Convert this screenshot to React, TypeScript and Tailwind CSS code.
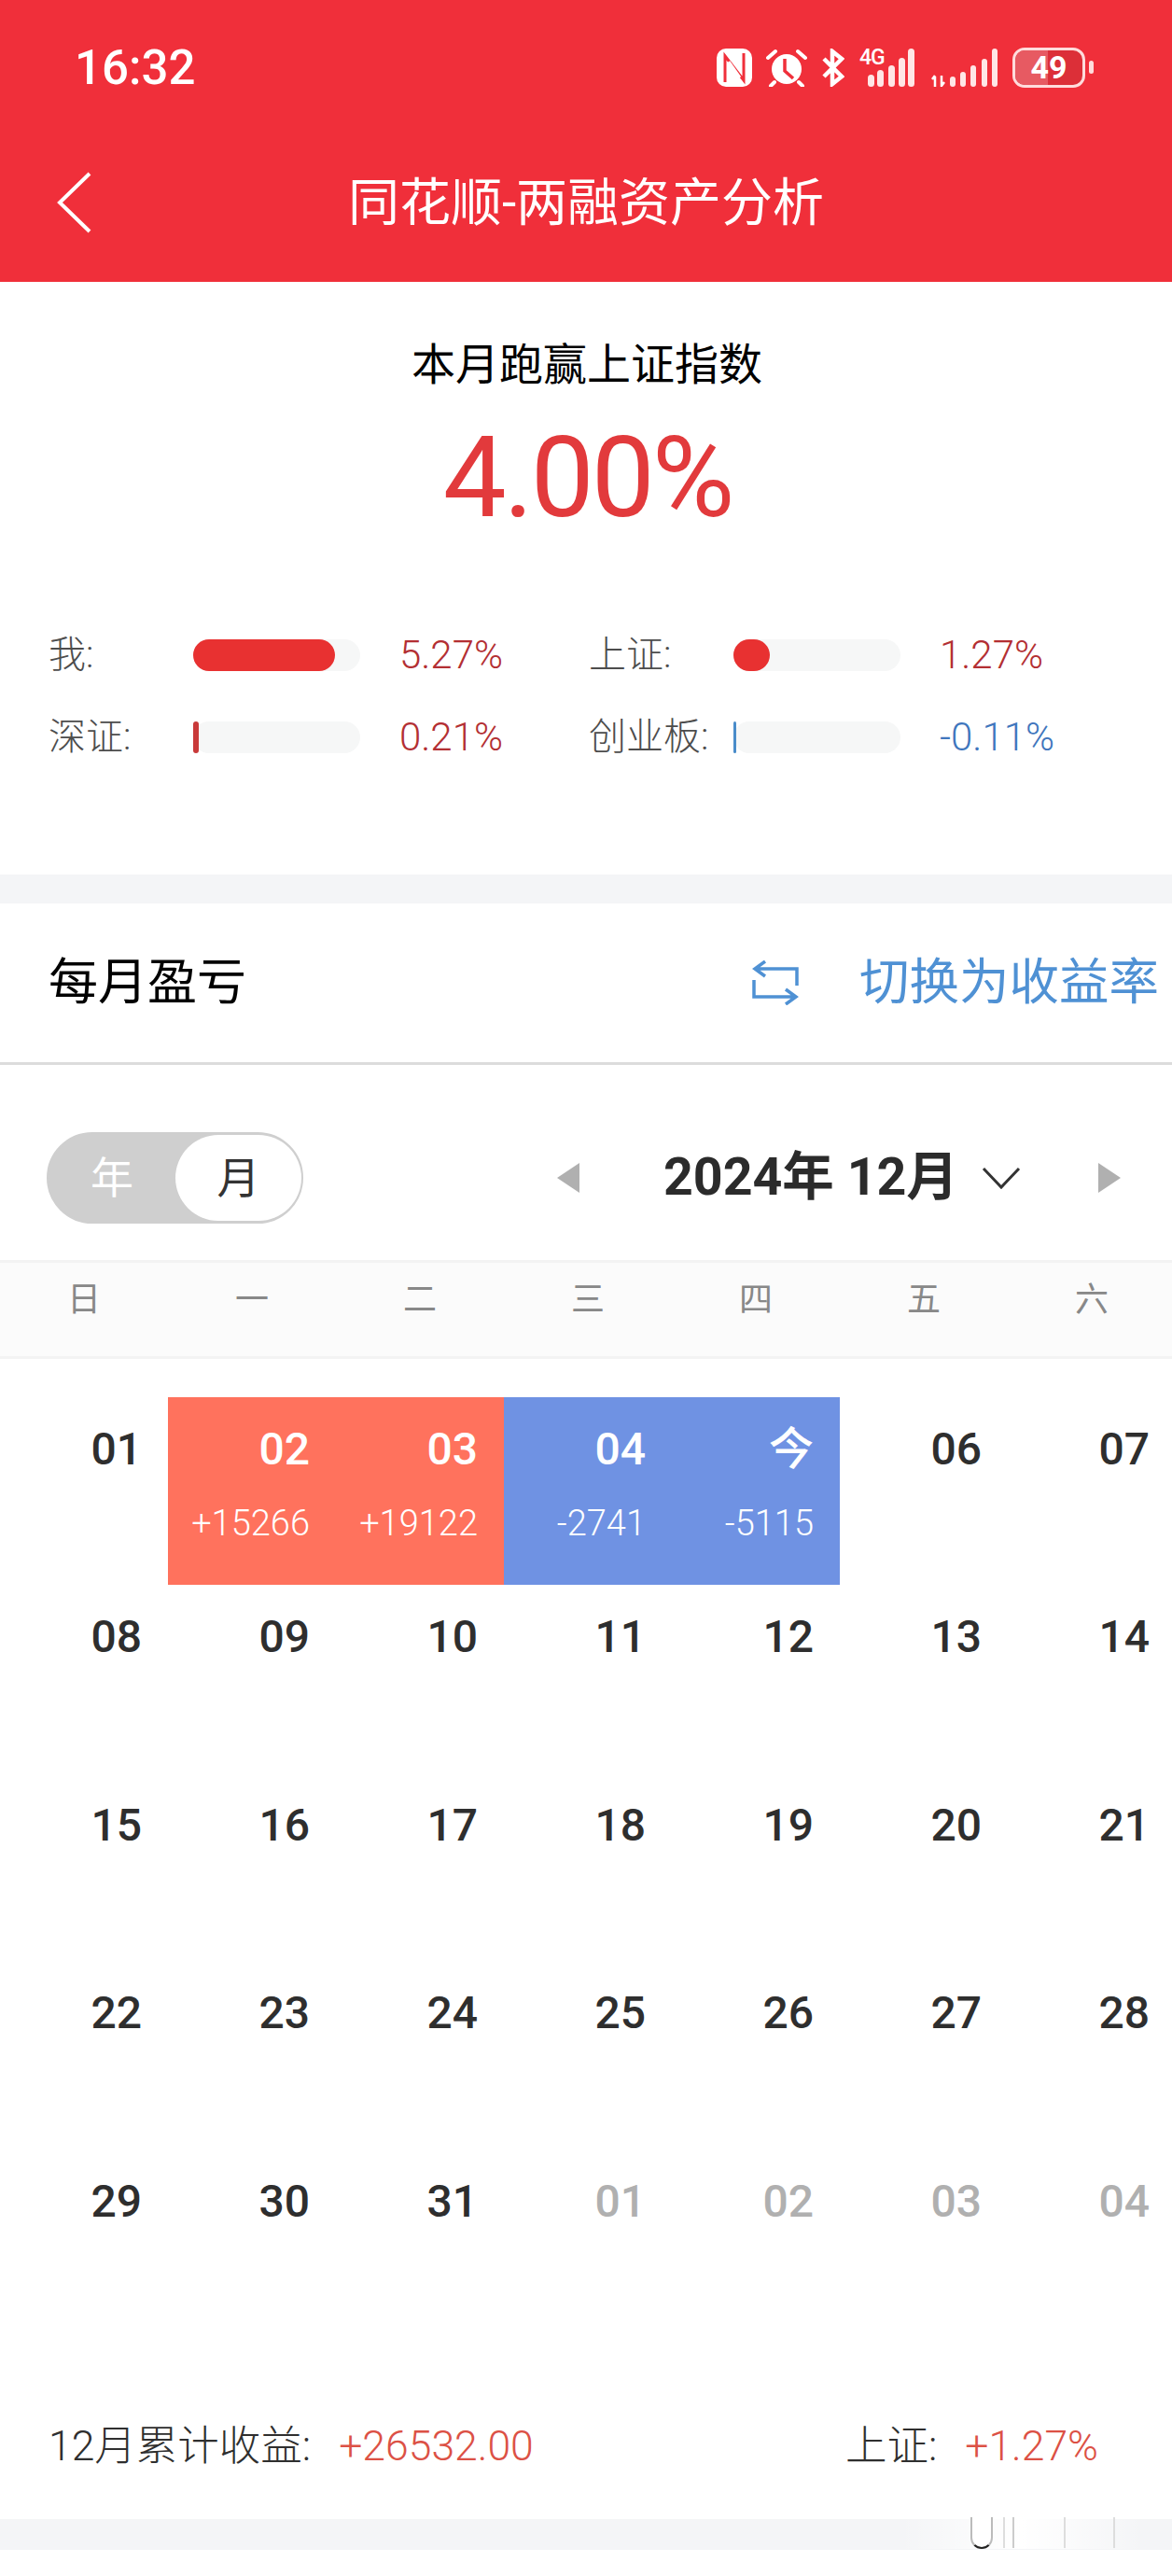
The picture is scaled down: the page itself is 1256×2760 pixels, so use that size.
import React from 'react';

type Day = { d: string; tone?: 'up' | 'down'; sub?: string; muted?: boolean };

const rows: Day[][] = [
  [
    { d: '01' },
    { d: '02', tone: 'up', sub: '+15266' },
    { d: '03', tone: 'up', sub: '+19122' },
    { d: '04', tone: 'down', sub: '-2741' },
    { d: '今', tone: 'down', sub: '-5115' },
    { d: '06' },
    { d: '07' },
  ],
  ['08', '09', '10', '11', '12', '13', '14'].map((d) => ({ d })),
  ['15', '16', '17', '18', '19', '20', '21'].map((d) => ({ d })),
  ['22', '23', '24', '25', '26', '27', '28'].map((d) => ({ d })),
  [
    { d: '29' },
    { d: '30' },
    { d: '31' },
    { d: '01', muted: true },
    { d: '02', muted: true },
    { d: '03', muted: true },
    { d: '04', muted: true },
  ],
];

const weekdays = ['日', '一', '二', '三', '四', '五', '六'];

const StatusIcons = () => (
  <div className="flex items-center ml-auto mr-[84px]">
    {/* nfc */}
    <svg width="38" height="41" viewBox="0 0 38 41">
      <rect x="0" y="0" width="38" height="41" rx="10" fill="#fff" />
      <path d="M9 36V8l20 26V5" fill="none" stroke="#f02f3a" strokeWidth="3" />
      <path d="M13 14l12 17" fill="none" stroke="#fff" strokeWidth="3" />
    </svg>
    {/* alarm */}
    <svg className="ml-[14px]" width="46" height="41" viewBox="0 0 46 41">
      <circle cx="23" cy="22" r="16" fill="#fff" />
      <path d="M3 10 11 3M43 10 35 3M10 36l-4 4M36 36l4 4" stroke="#fff" strokeWidth="4" strokeLinecap="round" />
      <path d="M21 11v13l9 8" fill="none" stroke="#f02f3a" strokeWidth="3.5" />
    </svg>
    {/* bluetooth */}
    <svg className="ml-[14px]" width="25" height="41" viewBox="0 0 25 41">
      <path d="M3 11 22 30 12 38V3l10 8L3 30" fill="none" stroke="#fff" strokeWidth="4.5" />
    </svg>
    {/* 4g signal */}
    <div className="ml-[16px] relative w-[59px] h-[41px]">
      <span className="absolute left-0 top-[-3px] text-[23px] leading-[26px] font-medium text-white tracking-[-1px]">4G</span>
      <svg className="absolute left-0 top-0" width="59" height="41" viewBox="0 0 59 41">
        <rect x="9" y="28" width="7" height="13" rx="3.5" fill="#ffe6e6" />
        <rect x="19" y="23" width="7" height="18" rx="3.5" fill="#ffe6e6" />
        <rect x="31" y="18" width="7" height="23" rx="3.5" fill="#ffe6e6" />
        <rect x="42" y="10" width="7" height="31" rx="3.5" fill="#ffe6e6" />
        <rect x="52" y="0" width="7" height="41" rx="3.5" fill="#ffe6e6" />
      </svg>
    </div>
    {/* second sim */}
    <svg className="ml-[17px]" width="72" height="41" viewBox="0 0 72 41">
      <path d="M5 30v11M2 33l3-4M12 29v11l3-4" fill="none" stroke="#fff" strokeWidth="2.5" />
      <rect x="21" y="30" width="6" height="11" rx="3" fill="#ffe6e6" />
      <rect x="32" y="25" width="6" height="16" rx="3" fill="#ffe6e6" />
      <rect x="43" y="18" width="6" height="23" rx="3" fill="#ffe6e6" />
      <rect x="55" y="11" width="6" height="30" rx="3" fill="#ffe6e6" />
      <rect x="66" y="0" width="6" height="41" rx="3" fill="#ffe6e6" />
    </svg>
    {/* battery */}
    <div className="ml-[16px] relative w-[78px] h-[43px] rounded-[13px] border-[3px] border-[#ffdcdc] overflow-hidden bg-[#dc2f38]">
      <div className="w-[49%] h-full bg-[#e75a62]" />
      <span className="absolute inset-0 flex items-center justify-center text-[34px] font-bold text-white">49</span>
    </div>
    <div className="ml-[4px] w-[5px] h-[14px] rounded-full bg-[#ffdcdc]" />
  </div>
);

const Stat = ({
  label,
  fill,
  fillClass,
  value,
  valueClass,
}: {
  label: string;
  fill: string;
  fillClass: string;
  value: string;
  valueClass: string;
}) => (
  <div className="flex items-center w-[579px]">
    <span className="w-[155px] text-[40px] leading-[44px] font-light text-[#4d4d4d]">{label}</span>
    <div className="w-[179px] h-[34px] rounded-full bg-[#f6f7f7]">
      <div className={`${fill} h-full rounded-full ${fillClass}`} />
    </div>
    <span className={`ml-[42px] text-[42px] leading-[44px] font-light ${valueClass}`}>{value}</span>
  </div>
);

export default function App() {
  return (
    <div className="relative w-full h-[2760px] bg-white overflow-hidden font-[Roboto,'Noto_Sans_CJK_SC',sans-serif]">
      <header className="h-[302px] bg-[#f02f3a] text-white flex flex-col">
        <div className="h-[144px] flex items-center pl-[80px]">
          <span className="text-[51px] leading-none font-medium">16:32</span>
          <StatusIcons />
        </div>
        <div className="h-[146px] grid grid-cols-[1fr_auto_1fr] items-center">
          <svg className="ml-[60px]" width="38" height="66" viewBox="0 0 38 66">
            <path d="M36 2 4 33l32 31" fill="none" stroke="#fff" strokeWidth="4" />
          </svg>
          <h1 className="text-[55px] leading-none font-normal">同花顺-两融资产分析</h1>
          <div />
        </div>
      </header>

      <section className="h-[635px] flex flex-col items-center">
        <div className="mt-[65px] ml-[2px] text-[47px] leading-[48px] text-black">本月跑赢上证指数</div>
        <div className="mt-[37px] ml-[3px] text-[121px] leading-[121px] tracking-[-3px] text-[#e23a3c]">4.00%</div>
        <div className="mt-[107px] self-stretch pl-[52px] flex flex-col gap-[44px]">
          <div className="flex">
            <Stat label="我:" fill="w-[152px]" fillClass="bg-[#e83131]" value="5.27%" valueClass="text-[#b32f33]" />
            <Stat label="上证:" fill="w-[39px]" fillClass="bg-[#e83131]" value="1.27%" valueClass="text-[#b32f33]" />
          </div>
          <div className="flex">
            <Stat label="深证:" fill="w-[6px]" fillClass="bg-[#c93a3a]" value="0.21%" valueClass="text-[#b32f33]" />
            <Stat label="创业板:" fill="w-[3px]" fillClass="bg-[#4a8cca]" value="-0.11%" valueClass="text-[#3f76bd]" />
          </div>
        </div>
      </section>

      <div className="h-[31px] bg-[#f4f5f7]" />

      <div className="h-[173px] border-b-[3px] border-[#dcdcdc] flex items-center pl-[52px] pr-[14px]">
        <span className="text-[53px] leading-none text-black">每月盈亏</span>
        <svg className="ml-auto" width="50" height="48" viewBox="0 0 50 48">
          <path
            d="M14 1 3 9l11 8M3 9h45v18M2 21v18h45M36 31l11 8-11 8"
            fill="none"
            stroke="#4f91d4"
            strokeWidth="3.5"
          />
        </svg>
        <span className="ml-[65px] text-[53.5px] leading-none text-[#4f91d4]">切换为收益率</span>
      </div>

      <div className="h-[209px] flex items-center pl-[50px] pt-[32px]">
        <div className="w-[275px] h-[98px] rounded-full bg-[#cfcfcf] border-2 border-[#cfcfcf] flex items-center">
          <span className="w-[136px] text-center text-[46px] leading-none text-white">年</span>
          <span className="w-[135px] h-[92px] rounded-full bg-white flex items-center justify-center text-[46px] leading-none text-[#333]">
            月
          </span>
        </div>
        <svg className="ml-[272px]" width="24" height="32" viewBox="0 0 24 32">
          <path d="M24 0v32L0 16z" fill="#b0b0b0" />
        </svg>
        <span className="ml-[90px] w-[330px] text-[55.5px] leading-none font-bold text-[#2b2b2b] whitespace-nowrap">2024年 12月</span>
        <svg className="ml-[11px]" width="42" height="26" viewBox="0 0 42 26">
          <path d="M2 3l19 20L40 3" fill="none" stroke="#333" strokeWidth="3" />
        </svg>
        <svg className="ml-[83px]" width="24" height="32" viewBox="0 0 24 32">
          <path d="M0 0v32l24-16z" fill="#b0b0b0" />
        </svg>
      </div>

      <div className="h-[106px] bg-[#fbfbfb] border-y-[3px] border-[#f3f3f3] grid grid-cols-[repeat(7,180px)] pt-[20px]">
        {weekdays.map((w) => (
          <span key={w} className="text-center text-[36px] leading-[40px] text-[#888]">
            {w}
          </span>
        ))}
      </div>

      <div className="pt-[41px]">
        {rows.map((row, i) => (
          <div key={i} className="grid grid-cols-[repeat(7,180px)] h-[201.4px]">
            {row.map((cell, j) => (
              <div
                key={j}
                className={`flex flex-col items-end pr-[28px] pt-[32px] ${
                  cell.tone === 'up' ? 'bg-[#ff725d] text-white' : cell.tone === 'down' ? 'bg-[#6f92e3] text-white' : ''
                }`}
              >
                <span
                  className={`text-[48px] leading-[48px] font-medium ${
                    cell.muted ? 'text-[#b0b0b0]' : cell.tone ? 'text-white' : 'text-[#2e2e2e]'
                  }`}
                >
                  {cell.d}
                </span>
                {cell.sub && <span className="mt-[36px] text-[38px] leading-[38px] font-light">{cell.sub}</span>}
              </div>
            ))}
          </div>
        ))}
      </div>

      <div className="mt-[95px] flex items-center pl-[52px] pr-[79px] text-[44.5px] leading-[44px] font-light">
        <span className="text-[#2f2f2f]">12月累计收益:</span>
        <span className="ml-[30px] text-[#dc5145]">+26532.00</span>
        <span className="ml-auto text-[#2f2f2f]">上证:</span>
        <span className="ml-[30px] text-[#dc5145]">+1.27%</span>
      </div>

      <div className="mt-[56px] h-[33px] bg-[#f4f5f7]" />

      {/* stray smear over the bottom band */}
      <div className="absolute left-[965px] top-[2697px] w-[260px] h-[34px] bg-linear-to-r from-transparent via-white to-transparent">
        <div className="absolute left-[75px] top-0 w-[24px] h-[34px] border-x-2 border-b-2 border-x-[#bbb] border-b-[#222] rounded-b-[12px] bg-white" />
        <div className="absolute left-[110px] top-0 w-[2px] h-[33px] bg-[#ddd]" />
        <div className="absolute left-[120px] top-0 w-[2px] h-[33px] bg-[#ccc]" />
        <div className="absolute left-[175px] top-0 w-[2px] h-[33px] bg-[#ddd]" />
        <div className="absolute left-[228px] top-0 w-[2px] h-[33px] bg-[#ddd]" />
      </div>
    </div>
  );
}
